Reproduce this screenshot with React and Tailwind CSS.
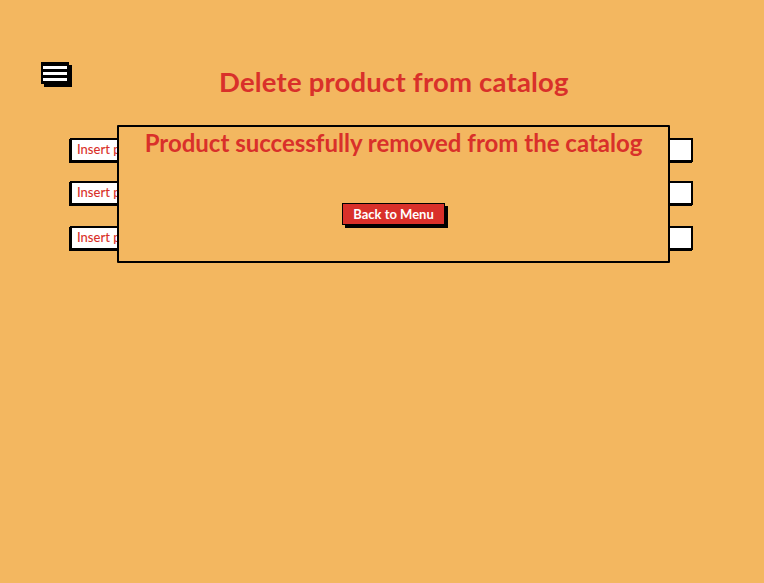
import React from 'react';

const font = { fontFamily: '"Lato", "Open Sans", "Liberation Sans", sans-serif' };

function Field({ label }) {
  return (
    <div className="h-[24px] w-[623px] border-2 border-black bg-white shadow-[-1px_1px_0_#000] flex items-center pl-[5px]">
      <span className="w-[40px] overflow-hidden whitespace-nowrap text-[13px] text-[#d9302a] font-medium">{label}</span>
    </div>
  );
}

export default function App() {
  return (
    <div className="w-[764px] h-[583px] bg-[#f3b760] relative overflow-hidden" style={font}>
      {/* header */}
      <div className="flex items-start pt-[62px] pl-[41px]">
        <div className="w-[28px] h-[22px] bg-black shadow-[3px_3px_0_#000] flex flex-col justify-center gap-[3px] px-[2px]">
          <div className="h-[3px] bg-white" />
          <div className="h-[3px] bg-white" />
          <div className="h-[3px] bg-white" />
        </div>
        <h1 className="ml-[150px] mt-[3px] text-[27.5px] leading-[34px] font-bold text-[#d9302a] tracking-[0.2px]">
          Delete product from catalog
        </h1>
      </div>

      {/* form fields underneath */}
      <div className="flex flex-col gap-[19px] pl-[70px] mt-[39px]">
        <Field label="Insert product id" />
        <Field label="Insert product name" />
        <div className="mt-[2px]">
          <Field label="Insert product category" />
        </div>
      </div>

      {/* modal */}
      <div className="absolute left-[117px] top-[125px] w-[553px] h-[138px] border-2 border-black bg-[#f3b760] rounded-[1px] flex flex-col items-center">
        <p className="mt-[1px] text-[24px] leading-[30px] font-bold text-[#d9302a]">
          Product successfully removed from the catalog
        </p>
        <button className="mt-[45px] h-[22px] px-[10px] bg-[#d9302a] border border-black shadow-[3px_3px_0_#000] text-white text-[13px] font-bold leading-none">
          Back to Menu
        </button>
      </div>
    </div>
  );
}
